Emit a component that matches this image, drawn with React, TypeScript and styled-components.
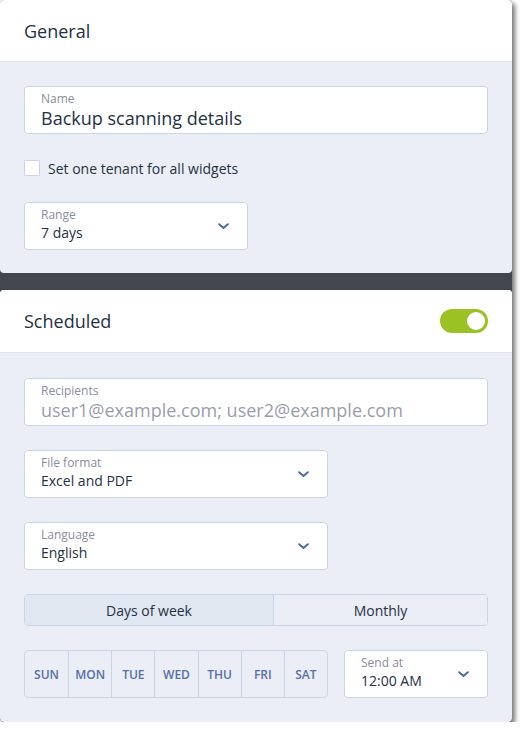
import React from "react";
import styled, { createGlobalStyle } from "styled-components";

const Global = createGlobalStyle`
  html, body { margin: 0; padding: 0; background: #ffffff; }
  body { font-family: "Open Sans", "Noto Sans", sans-serif; color: #243143; }
  * { box-sizing: border-box; }
`;

const Frame = styled.div`
  width: 512px;
  height: 722px;
  background: #42464f;
  display: flex;
  flex-direction: column;
  gap: 17px;
  border-radius: 4px;
  box-shadow: 3px 3px 5px rgba(0, 0, 0, 0.55);
  overflow: hidden;
`;

const Card = styled.section<{ $grow?: boolean }>`
  background: #ebeef6;
  border-radius: 4px;
  display: flex;
  flex-direction: column;
  flex: ${(p) => (p.$grow ? "1" : "none")};
`;

const Header = styled.header<{ $h: number }>`
  height: ${(p) => p.$h}px;
  background: #ffffff;
  border-bottom: 1px solid #dfe4ee;
  border-radius: 4px 4px 0 0;
  display: flex;
  align-items: center;
  justify-content: space-between;
  padding: 0 24px;
`;

const Title = styled.h2`
  margin: 0;
  font-size: 18px;
  font-weight: 400;
  color: #243143;
`;

const Body = styled.div<{ $pt: number; $pb: number }>`
  padding: ${(p) => p.$pt}px 24px ${(p) => p.$pb}px;
  display: flex;
  flex-direction: column;
  gap: 24px;
`;

const Field = styled.div<{ $w?: number }>`
  width: ${(p) => (p.$w ? `${p.$w}px` : "100%")};
  height: 48px;
  background: #ffffff;
  border: 1px solid #c9d5e7;
  border-radius: 4px;
  padding: 4px 16px 0;
  position: relative;
  display: flex;
  flex-direction: column;
`;

const Label = styled.span`
  font-size: 12px;
  line-height: 16px;
  color: #8a8d9e;
`;

const Value = styled.span<{ $big?: boolean; $muted?: boolean }>`
  font-size: ${(p) => (p.$big ? "18px" : "14px")};
  line-height: ${(p) => (p.$big ? "23px" : "20px")};
  color: ${(p) => (p.$muted ? "#9a9dab" : "#243143")};
  white-space: nowrap;
`;

const Chevron = styled.svg`
  position: absolute;
  right: 18px;
  top: 50%;
  margin-top: -3px;
`;

const CheckRow = styled.label`
  display: flex;
  align-items: center;
  gap: 8px;
  height: 20px;
  font-size: 14px;
  color: #243143;
`;

const Box = styled.span`
  width: 16px;
  height: 16px;
  background: #ffffff;
  border: 1px solid #c9d5e7;
  border-radius: 2px;
`;

const Toggle = styled.span`
  width: 48px;
  height: 24px;
  border-radius: 12px;
  background: #9bc225;
  display: flex;
  align-items: center;
  justify-content: flex-end;
  padding: 0 3px;
`;

const Knob = styled.span`
  width: 18px;
  height: 18px;
  border-radius: 50%;
  background: #ffffff;
`;

const Tabs = styled.div`
  display: grid;
  grid-template-columns: 248px 1fr;
  height: 32px;
  border: 1px solid #c9d5e7;
  border-radius: 4px;
  overflow: hidden;
`;

const Tab = styled.div<{ $active?: boolean }>`
  display: flex;
  align-items: center;
  justify-content: center;
  font-size: 14px;
  color: #243143;
  background: ${(p) => (p.$active ? "#e1e7f1" : "#ebeef6")};
  & + & { border-left: 1px solid #c9d5e7; }
`;

const ScheduleRow = styled.div`
  display: flex;
  gap: 16px;
  align-items: stretch;
`;

const Days = styled.div`
  width: 304px;
  height: 48px;
  display: grid;
  grid-template-columns: repeat(7, 1fr);
  border: 1px solid #c9d5e7;
  border-radius: 4px;
  overflow: hidden;
`;

const Day = styled.div`
  display: flex;
  align-items: center;
  justify-content: center;
  font-size: 12px;
  font-weight: 600;
  color: #5670a6;
  & + & { border-left: 1px solid #c9d5e7; }
`;

const ChevronIcon = () => (
  <Chevron width="11" height="7" viewBox="0 0 11 7">
    <path d="M1.2 1.2 L5.5 5 L9.8 1.2" fill="none" stroke="#4c6cab" strokeWidth="2" strokeLinecap="round" strokeLinejoin="round" />
  </Chevron>
);

const Select = ({ label, value, w }: { label: string; value: string; w: number }) => (
  <Field $w={w}>
    <Label>{label}</Label>
    <Value>{value}</Value>
    <ChevronIcon />
  </Field>
);

const days = ["SUN", "MON", "TUE", "WED", "THU", "FRI", "SAT"];

export default function App() {
  return (
    <>
      <Global />
      <Frame>
        <Card>
          <Header $h={62}>
            <Title>General</Title>
          </Header>
          <Body $pt={24} $pb={23}>
            <Field>
              <Label>Name</Label>
              <Value $big>Backup scanning details</Value>
            </Field>
            <CheckRow>
              <Box />
              Set one tenant for all widgets
            </CheckRow>
            <Select label="Range" value="7 days" w={224} />
          </Body>
        </Card>
        <Card $grow>
          <Header $h={63}>
            <Title>Scheduled</Title>
            <Toggle>
              <Knob />
            </Toggle>
          </Header>
          <Body $pt={25} $pb={24}>
            <Field>
              <Label>Recipients</Label>
              <Value $big $muted>user1@example.com; user2@example.com</Value>
            </Field>
            <Select label="File format" value="Excel and PDF" w={304} />
            <Select label="Language" value="English" w={304} />
            <Tabs>
              <Tab $active>Days of week</Tab>
              <Tab>Monthly</Tab>
            </Tabs>
            <ScheduleRow>
              <Days>
                {days.map((d) => (
                  <Day key={d}>{d}</Day>
                ))}
              </Days>
              <Select label="Send at" value="12:00 AM" w={144} />
            </ScheduleRow>
          </Body>
        </Card>
      </Frame>
    </>
  );
}
